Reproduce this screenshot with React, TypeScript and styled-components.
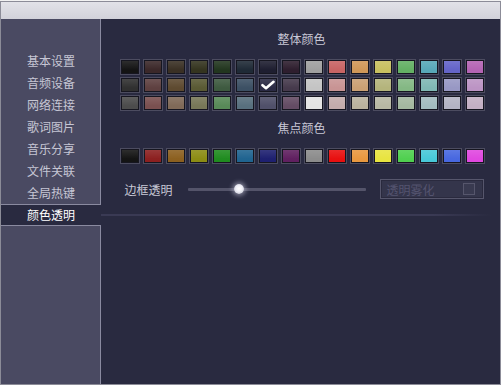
import React from "react";
import styled, { createGlobalStyle } from "styled-components";

const GlobalStyle = createGlobalStyle`
  html, body {
    margin: 0;
    padding: 0;
    background: #f2f2f2;
    font-family: "Noto Sans CJK SC", "Noto Sans", sans-serif;
  }
`;

const MENU = ["基本设置", "音频设备", "网络连接", "歌词图片", "音乐分享", "文件关联", "全局热键", "颜色透明"];
const ACTIVE = 7;

const MAIN_ROWS: string[][] = [
  ["#141414", "#3b2829", "#3a3024", "#34341f", "#22361f", "#1f2a36", "#1e1e30", "#2e1e2e", "#a0a0a0", "#c86464", "#d09858", "#c8c060", "#64b064", "#58a8b8", "#6464c8", "#b464b4"],
  ["#303030", "#5e4040", "#5e4a30", "#5a5a34", "#3e5a40", "#3c5064", "#2a2a44", "#463a4c", "#c4c4c4", "#c89494", "#caa074", "#b4b47c", "#84b884", "#80b8b4", "#9898c4", "#bc94c4"],
  ["#4c4c4c", "#7a5050", "#806a58", "#787858", "#588a58", "#58707e", "#50506a", "#644c64", "#e4e4e4", "#c4acac", "#bab29e", "#b8b8a4", "#a4b8a0", "#a4bcc0", "#b4b4c4", "#c4b0c4"],
];

const FOCUS_ROW = ["#141414", "#8c2020", "#8c6020", "#8c8c14", "#208c20", "#206490", "#1e2070", "#602060", "#8c8c8c", "#e81010", "#e89840", "#e8e440", "#50d050", "#48c8d8", "#4868e0", "#e048e0"];

const SELECTED = { row: 1, col: 6 };

const Window = styled.div`
  margin-top: 1px;
  width: 499px;
  height: 382px;
  border: 1px solid #8c8c98;
  display: flex;
  flex-direction: column;
  background: #292a40;
  overflow: hidden;
`;

const TitleBar = styled.div`
  height: 17px;
  flex-shrink: 0;
  background: linear-gradient(#e2e2e8, #d2d2da);
`;

const Body = styled.div`
  flex: 1;
  display: flex;
`;

const Sidebar = styled.div`
  width: 100px;
  flex-shrink: 0;
  display: flex;
  flex-direction: column;
  padding-top: 31px;
  background: #4a4a62;
  border-right: 1px solid #8a8aa0;
  box-sizing: border-box;
`;

const MenuItem = styled.div<{ $active?: boolean }>`
  height: ${(p) => (p.$active ? "20px" : "22px")};
  line-height: ${(p) => (p.$active ? "20px" : "22px")};
  padding-left: 26px;
  font-size: 12px;
  color: ${(p) => (p.$active ? "#ffffff" : "#c6c6d4")};
  background: ${(p) => (p.$active ? "#292a40" : "transparent")};
  border-top: ${(p) => (p.$active ? "1px solid #8a8aa0" : "none")};
  border-bottom: ${(p) => (p.$active ? "1px solid #8a8aa0" : "none")};
  margin-right: ${(p) => (p.$active ? "-1px" : "0")};
`;

const Main = styled.div`
  flex: 1;
  display: flex;
  flex-direction: column;
  align-items: center;
  padding-top: 12px;
`;

const SectionTitle = styled.div<{ $top?: number }>`
  font-size: 12px;
  line-height: 16px;
  color: #c8c8d6;
  margin-top: ${(p) => p.$top ?? 0}px;
  margin-bottom: 12px;
  margin-left: 2px;
`;

const Grid = styled.div`
  display: grid;
  grid-template-columns: repeat(16, 20px);
  grid-auto-rows: 16px;
  column-gap: 3px;
  row-gap: 2px;
  margin-left: 3px;
`;

const Swatch = styled.div<{ $color: string }>`
  box-sizing: border-box;
  border: 1px solid #4c4c60;
  background: linear-gradient(rgba(255, 255, 255, 0.12), rgba(255, 255, 255, 0) 70%),
    ${(p) => p.$color};
  box-shadow: inset 0 0 0 1px #161620;
  display: flex;
  align-items: center;
  justify-content: center;
`;

const ControlRow = styled.div`
  display: flex;
  align-items: center;
  margin-top: 15px;
  margin-left: 7px;
  height: 20px;
`;

const Label = styled.div`
  font-size: 12px;
  color: #c8c8d6;
  width: 48px;
  white-space: nowrap;
`;

const Track = styled.div`
  position: relative;
  width: 178px;
  height: 3px;
  margin-left: 15px;
  background: #54546a;
  border-radius: 1px;
`;

const Thumb = styled.div`
  position: absolute;
  top: 50%;
  width: 10px;
  height: 10px;
  margin: -5px 0 0 -5px;
  border-radius: 50%;
  background: radial-gradient(circle at 50% 45%, #ffffff 0, #f0f0f8 40%, #b8b8c8 100%);
  box-shadow: 0 0 4px 2px rgba(220, 220, 240, 0.45);
`;

const ToggleBox = styled.div`
  margin-left: 14px;
  width: 104px;
  height: 20px;
  box-sizing: border-box;
  border: 1px solid #56566c;
  background: #34354b;
  box-shadow: inset 0 0 0 1px #2a2a3e;
  display: flex;
  align-items: center;
  justify-content: space-between;
  padding: 0 8px 0 6px;
  font-size: 12px;
  color: #545470;
`;

const CheckSquare = styled.div`
  width: 12px;
  height: 12px;
  box-sizing: border-box;
  border: 1px solid #56566c;
  background: #393a50;
`;

const Divider = styled.div`
  align-self: stretch;
  height: 2px;
  margin-top: 15px;
  margin-right: 8px;
  background: linear-gradient(90deg, #3a3a54 0%, #3a3a54 85%, rgba(58, 58, 84, 0) 100%);
`;

const Check = () => (
  <svg width="14" height="10" viewBox="0 0 14 10">
    <path d="M1.5 5.2 L5 8.2 L12.5 1.8" stroke="#ffffff" strokeWidth="2.6" fill="none" strokeLinecap="round" strokeLinejoin="round" />
  </svg>
);

export default function App() {
  return (
    <>
      <GlobalStyle />
      <Window>
        <TitleBar />
        <Body>
          <Sidebar>
            {MENU.map((m, i) => (
              <MenuItem key={m} $active={i === ACTIVE}>
                {m}
              </MenuItem>
            ))}
          </Sidebar>
          <Main>
            <SectionTitle>整体颜色</SectionTitle>
            <Grid>
              {MAIN_ROWS.map((row, r) =>
                row.map((c, ci) => (
                  <Swatch key={`${r}-${ci}`} $color={c}>
                    {r === SELECTED.row && ci === SELECTED.col && <Check />}
                  </Swatch>
                ))
              )}
            </Grid>
            <SectionTitle $top={9}>焦点颜色</SectionTitle>
            <Grid>
              {FOCUS_ROW.map((c, i) => (
                <Swatch key={i} $color={c} />
              ))}
            </Grid>
            <ControlRow>
              <Label>边框透明</Label>
              <Track>
                <Thumb style={{ left: `${(51 / 178) * 100}%` }} />
              </Track>
              <ToggleBox>
                <span>透明雾化</span>
                <CheckSquare />
              </ToggleBox>
            </ControlRow>
            <Divider />
          </Main>
        </Body>
      </Window>
    </>
  );
}
